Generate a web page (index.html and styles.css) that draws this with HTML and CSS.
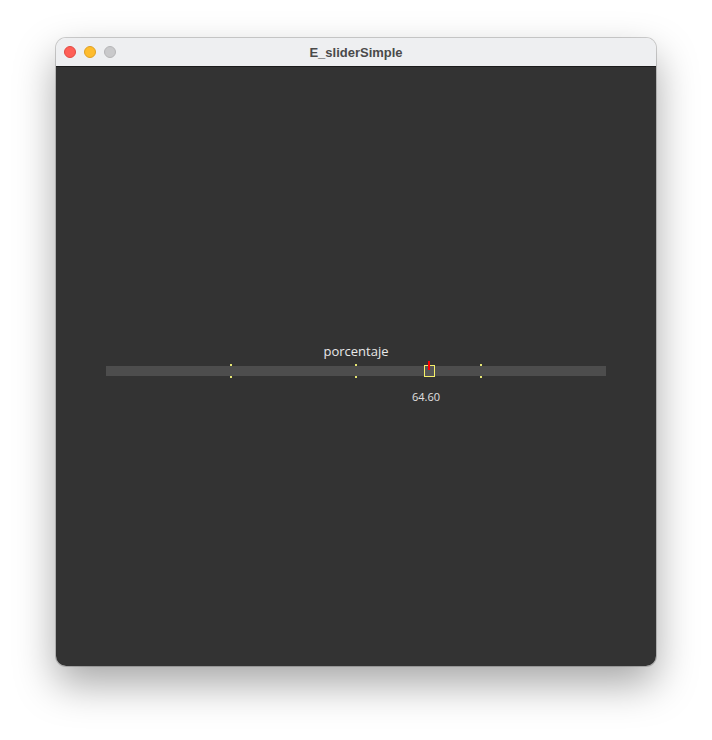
FILE: index.html
```html
<!DOCTYPE html>
<html>
<head>
<meta charset="utf-8">
<link rel="stylesheet" href="styles.css">
</head>
<body>
<div class="window">
  <div class="titlebar">
    <div class="lights">
      <span class="light red"></span>
      <span class="light yellow"></span>
      <span class="light gray"></span>
    </div>
    <div class="title">E_sliderSimple</div>
  </div>
  <div class="content">
    <div class="slider">
      <div class="label">porcentaje</div>
      <div class="track">
        <span class="tick" style="left:25%"></span>
        <span class="tick" style="left:50%"></span>
        <span class="tick" style="left:75%"></span>
        <span class="handle" style="left:64.6%"></span>
      </div>
      <div class="values">
        <span class="value" style="left:64.6%">64.60</span>
      </div>
    </div>
  </div>
</div>
</body>
</html>
```
FILE: styles.css
```css
html, body {
  margin: 0;
  padding: 0;
  background: #ffffff;
}
body {
  box-sizing: border-box;
  min-height: 740px;
  padding: 38px 56px 74px 56px;
  font-family: "Open Sans", "Noto Sans", sans-serif;
}
.window {
  width: 600px;
  height: 628px;
  border-radius: 10px;
  overflow: hidden;
  box-shadow: 0 0 0 1px rgba(0,0,0,0.18), 0 18px 40px rgba(0,0,0,0.35);
  display: flex;
  flex-direction: column;
}
.titlebar {
  height: 28px;
  flex: none;
  background: #eeeff1;
  border-bottom: 1px solid #1c1c1c;
  display: flex;
  align-items: center;
  position: relative;
}
.lights {
  display: flex;
  gap: 8px;
  padding-left: 8px;
}
.light {
  width: 12px;
  height: 12px;
  border-radius: 50%;
  box-sizing: border-box;
}
.red { background: #fe5f57; border: 1px solid #e14942; }
.yellow { background: #febc2e; border: 1px solid #dfa023; }
.gray { background: #c9c9cb; border: 1px solid #b5b5b7; }
.title {
  position: absolute;
  left: 0;
  right: 0;
  text-align: center;
  font-family: "Liberation Sans", "Open Sans", sans-serif;
  font-weight: bold;
  font-size: 13px;
  color: #4a4a4a;
}
.content {
  flex: 1;
  background: #333333;
  display: flex;
  flex-direction: column;
  align-items: center;
  padding-top: 275px;
}
.slider {
  width: 500px;
  display: flex;
  flex-direction: column;
  align-items: center;
}
.label {
  font-size: 13px;
  color: #e8e8e8;
  line-height: 18px;
  margin-bottom: 6px;
}
.track {
  width: 500px;
  height: 10px;
  background: #4d4d4d;
  position: relative;
}
.tick {
  position: absolute;
  top: -2px;
  width: 2px;
  height: 14px;
  margin-left: -1px;
  background: linear-gradient(#e6e672 0 2px, transparent 2px 12px, #e6e672 12px 14px);
}
.handle {
  position: absolute;
  top: -1px;
  width: 11px;
  height: 12px;
  margin-left: -5px;
  box-sizing: border-box;
  border: 1px solid #f5f06a;
  background: #555555;
}
.handle::before {
  content: "";
  position: absolute;
  left: 3px;
  top: -5px;
  width: 2px;
  height: 9px;
  background: #ff0000;
}
.values {
  width: 500px;
  height: 20px;
  position: relative;
  margin-top: 14px;
}
.value {
  position: absolute;
  top: 0;
  margin-left: -3px;
  transform: translateX(-50%);
  font-size: 11px;
  line-height: 14px;
  color: #e0e0e0;
}
```
